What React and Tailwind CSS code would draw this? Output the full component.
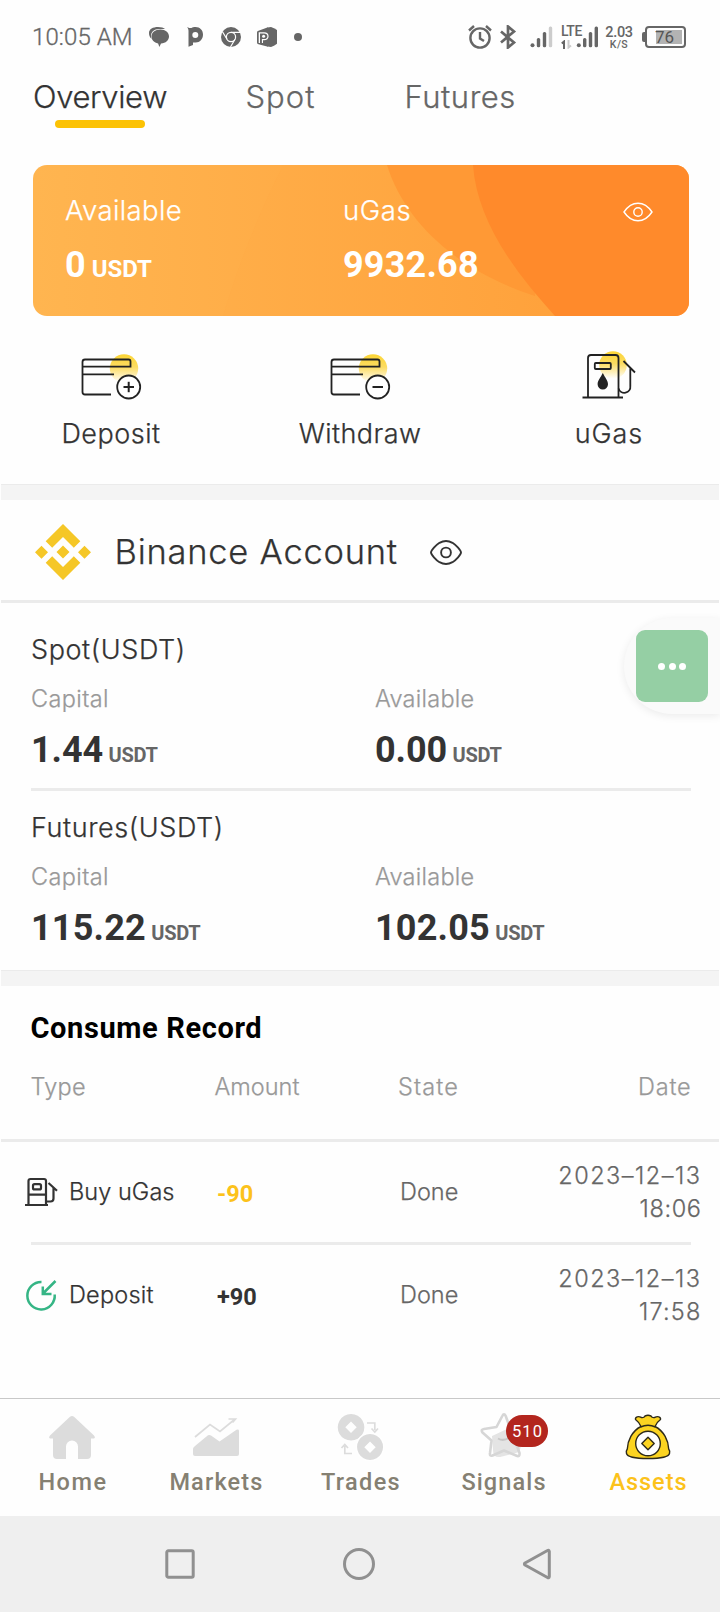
const light = "font-[Inter,sans-serif] font-light [-webkit-text-stroke:0.25px]";
const roboto = "font-[Roboto,sans-serif] [-webkit-text-stroke:0px]";

function StatusBar() {
  return (
    <div className={`flex h-[60px] shrink-0 items-center pt-[13px] pl-8 text-[#666] ${roboto}`}>
      <span className="w-[116px] text-[24px] leading-[28px] font-light tracking-[0.1px] [-webkit-text-stroke:0.3px]">10:05 AM</span>
      <svg className="h-[24px] w-[156px] shrink-0" viewBox="148 24 156 24" fill="#666">
        <path d="M149 32c0-4 4-6 9-6 3 0 6 .8 7 2h-6c-5 0-8 3-8 7 0 1 .2 2 .6 2.700C149.800 36.500 149 34.500 149 32z" />
        <path d="M160.500 28.500c5 0 8.500 3 8.500 7 0 3.600-3.200 6.800-8 7l-1.600 3.500-1.300-3.600c-4-.7-6.600-3.300-6.600-6.900 0-4 3.500-7 9-7z" />
        <path fillRule="evenodd" d="M187 26c1.500 1 3 1 4.500 1 1-1 2-1 4-1 4.500 0 7.500 3.200 7.500 7.500 0 4.600-3.200 8-7.300 8H193v2.500l-4.500 1.800V30c0-1.800-.6-3-1.500-4zM195.300 31a3 3 0 1 0 0 6 3 3 0 0 0 0-6z" />
        <circle cx="231" cy="36" r="10" />
        <g fill="none" stroke="#fff" strokeWidth="1.200">
          <circle cx="231" cy="36" r="4.600" />
          <path d="M231 31.400h9M227 38.300l-4.500-7.600M235 38.300l-4.500 7.700" />
        </g>
        <circle cx="231" cy="36" r="3.100" />
        <path d="M257 31.500Q257 30 258.500 29.700L268 26.300V45.700L258.500 43.200Q257 43 257 41.500z" />
        <path d="M267.500 26.500L271 26 274 27.200 277 29V42.800L274 44.800 271 46 267.500 45.500z" />
        <path d="M258.700 31.300H264.200C267 31.300 268.600 32.900 268.600 35.200S266.900 39.300 264 39.300H263V42H258.700z" fill="#fff" />
        <path fillRule="evenodd" d="M260 32.500H264C266.200 32.500 267.400 33.500 267.400 35.200S266.200 38.100 264 38.100H261.900V42H260z" />
        <circle cx="263.600" cy="35.300" r="1.500" fill="#fff" />
        <circle cx="298" cy="36" r="4" />
      </svg>
      <svg className="ml-[162px] h-[24px] w-[90px] shrink-0" viewBox="466 24 90 24">
        <g fill="none" stroke="#666" strokeWidth="2.400">
          <circle cx="480" cy="37" r="9.600" />
          <path d="M480 31v6.500l4 2.500M469 29.500l5-4.500M486 25l5 4.500" />
          <path d="M501 30.500l13 11-6 5V25.500l6 5-13 11" strokeWidth="2.700" />
        </g>
        <g fill="#666">
          <circle cx="532.500" cy="44.200" r="2" />
          <rect x="536.800" y="37" width="3.400" height="9.300" rx="1.500" />
          <rect x="542.800" y="31" width="3.400" height="15.300" rx="1.500" />
          <rect x="548.800" y="25.500" width="3.400" height="20.800" rx="1.500" fill="#ccc" />
        </g>
      </svg>
      <div className="ml-[5px] flex h-[24px] w-[23px] shrink-0 flex-col">
        <span className="text-[14px] leading-[13px] font-medium tracking-[-0.5px]">LTE</span>
        <svg className="mt-[2px] h-[9px] w-[14px]" viewBox="0 0 14 9">
          <path d="M3 9V1.500L.8 3.500" fill="none" stroke="#666" strokeWidth="2" />
          <path d="M7.500 0v7.500L10 5.500" fill="none" stroke="#ccc" strokeWidth="2" />
        </svg>
      </div>
      <svg className="-ml-[8px] h-[24px] w-[24px] shrink-0" viewBox="576 24 24 24" fill="#666">
        <circle cx="578.800" cy="44.200" r="2" />
        <rect x="583" y="37" width="3.400" height="9.300" rx="1.500" />
        <rect x="588.800" y="31" width="3.400" height="15.300" rx="1.500" />
        <rect x="594.600" y="25.500" width="3.400" height="20.800" rx="1.500" />
      </svg>
      <div className="ml-[5px] flex w-[28px] shrink-0 flex-col items-center pt-[2px] font-medium">
        <span className="text-[14.500px] leading-[13px] tracking-[-0.3px]">2.03</span>
        <span className="text-[10.500px] leading-[11px] tracking-[0.4px]">K/S</span>
      </div>
      <div className="ml-[9px] h-[10px] w-[3px] rounded-l-[2px] bg-[#666]" />
      <div className="relative flex h-[22px] w-[41px] shrink-0 items-center justify-center rounded-[4px] border-2 border-[#666]">
        <div className="absolute top-[2px] right-[2px] h-[14px] w-[26px] bg-[#b3b3b3]" />
        <span className="relative -left-px text-[17px] leading-[18px] text-[#555]">76</span>
      </div>
    </div>
  );
}

function TopTabs() {
  return (
    <div className={`flex h-[105px] shrink-0 pt-5 pl-[33px] text-[31px] leading-[33px] text-[#666] ${light}`}>
      <div className="flex w-[134px] flex-col items-center text-[#333]">
        <span className="tracking-[-0.35px]">Overview</span>
        <div className="mt-[7px] h-[8px] w-[90px] rounded-full bg-[#fcc205]" />
      </div>
      <span className="ml-[78.500px] w-[159px] tracking-[1px]">Spot</span>
      <span className="tracking-[0.55px]">Futures</span>
    </div>
  );
}

function BalanceCard() {
  return (
    <div className="relative ml-[33px] h-[151px] w-[656px] shrink-0 overflow-hidden rounded-[14px] bg-linear-to-r from-[#ffb550] to-[#ff9e37] text-white">
      <svg className="absolute inset-0" width="656" height="151" viewBox="0 0 656 151">
        <path d="M250 0C225 50 205 100 190 151H530V0z" fill="#ff9f33" opacity="0.040" />
        <path d="M354 0C372 58 425 106 502 131L520 0z" fill="#ff9935" />
        <path d="M440 0C444 55 480 105 522 151H656V0z" fill="#ff8a2b" />
      </svg>
      <div className="relative flex pl-8">
        <div className="w-[278px]">
          <div className={`mt-7 text-[27.500px] leading-[34px] tracking-[0.38px] ${light}`}>Available</div>
          <div className={`mt-[17px] flex items-baseline font-bold ${roboto}`}>
            <span className="text-[36px] leading-[42px]">0</span>
            <span className="ml-[6px] text-[24px]">USDT</span>
          </div>
        </div>
        <div className="w-[280px]">
          <div className={`mt-7 text-[27.500px] leading-[34px] tracking-[0.6px] ${light}`}>uGas</div>
          <div className={`mt-[17px] text-[36px] leading-[42px] font-bold tracking-[0.2px] ${roboto}`}>9932.68</div>
        </div>
        <svg className="mt-[37px]" width="30" height="20" viewBox="0 0 30 20" fill="none" stroke="#fff" strokeWidth="1.400">
          <path d="M1 10C5 4 10 1.200 15 1.200S25 4 29 10C25 16 20 18.800 15 18.800S5 16 1 10z" />
          <circle cx="15" cy="10" r="4.200" />
        </svg>
      </div>
    </div>
  );
}

function Glow({ id }) {
  return (
    <defs>
      <linearGradient id={id} x1="0" y1="0" x2="0" y2="1">
        <stop offset="0" stopColor="#fcd535" />
        <stop offset="0.450" stopColor="#fcdc62" />
        <stop offset="1" stopColor="#fff" />
      </linearGradient>
    </defs>
  );
}

function WalletIcon({ minus }) {
  const id = minus ? "glow-minus" : "glow-plus";
  return (
    <svg width="64" height="50" viewBox="79 351 64 50" fill="none" stroke="#222" strokeWidth="1.800">
      <Glow id={id} />
      <circle cx="124" cy="368.500" r="14.200" fill={`url(#${id})`} stroke="none" />
      <path d="M111 394.500H85a2.500 2.500 0 0 1-2.500-2.500V362a2.500 2.500 0 0 1 2.500-2.500H128.500a2 2 0 0 1 2 2V366.700H83M83 374.300H114" />
      <circle cx="128.700" cy="387" r="11.500" fill="#fff" />
      <path d="M123.500 387H134" strokeWidth="2" />
      {!minus && <path d="M128.700 381.800V392.200" strokeWidth="2" />}
    </svg>
  );
}

function GasIcon() {
  return (
    <svg width="64" height="50" viewBox="577 351 64 50" fill="none" stroke="#222" strokeWidth="1.800">
      <Glow id="glow-gas" />
      <circle cx="613" cy="365" r="13.800" fill="url(#glow-gas)" stroke="none" />
      <path d="M588 397V358a3 3 0 0 1 3-3H615.500a3 3 0 0 1 3 3V397M582.500 397.500H623" />
      <rect x="594.800" y="363" width="16" height="6" rx="1" />
      <path d="M602.800 373C605 377.500 608 380.500 608 384.200A5.200 5.200 0 0 1 597.600 384.200C597.600 380.500 600.600 377.500 602.800 373z" fill="#222" stroke="none" />
      <path d="M623.500 361L635 372.500M630.300 368V386a6 6 0 0 1-11.700 2.500" />
    </svg>
  );
}

function Actions() {
  return (
    <div className={`flex h-[168px] shrink-0 justify-between px-[42px] pt-[35px] text-[27px] leading-[33px] text-[#333] ${light}`}>
      <div className="flex w-[138px] flex-col items-center gap-4">
        <WalletIcon />
        <span className="tracking-[0.5px]">Deposit</span>
      </div>
      <div className="flex w-[138px] flex-col items-center gap-4">
        <WalletIcon minus />
        <span className="tracking-[0.45px]">Withdraw</span>
      </div>
      <div className="flex w-[138px] flex-col items-center gap-4">
        <GasIcon />
        <span className="tracking-[0.9px]">uGas</span>
      </div>
    </div>
  );
}

const Band = () => <div className="mx-px h-4 shrink-0 border-t border-[#ebebeb] bg-[#f4f4f4]" />;

function BinanceHeader() {
  return (
    <div className={`mx-px flex h-[103px] shrink-0 items-center border-b-[3px] border-[#ebebeb] pt-1 pl-[34px] text-[#333] ${light}`}>
      <svg width="56" height="56" viewBox="0 0 56 56" fill="#f5c727">
        <path d="M28 0L45.300 17.300 38.800 23.800 28 13 17.200 23.800 10.700 17.300z" />
        <path d="M28 56L45.300 38.700 38.800 32.200 28 43 17.200 32.200 10.700 38.700z" />
        <path d="M6.500 21.700L13 28.200 6.500 34.700 0 28.200zM49.500 21.700L56 28.200 49.500 34.700 43 28.200zM28 21.500L34.500 28 28 34.500 21.500 28z" />
      </svg>
      <span className="ml-[23.500px] w-[315.500px] text-[34.500px] leading-[42px] tracking-[0.76px]">Binance Account</span>
      <svg width="32" height="25" viewBox="0 0 32 25" fill="none" stroke="#333" strokeWidth="1.900">
        <path d="M1 12.500C1 10.500 6 5 9.500 2.800 13.500.6 18.500.6 22.500 2.800 26 5 31 10.500 31 12.500S26 20 22.500 22.200C18.500 24.400 13.500 24.400 9.500 22.200 6 20 1 14.500 1 12.500z" />
        <circle cx="16" cy="12.500" r="4.900" />
      </svg>
    </div>
  );
}

function Figure({ label, value, tracking, labelTracking }) {
  return (
    <div className="w-[344px] shrink-0">
      <div className={`text-[23.500px] leading-[28px] text-[#999] ${labelTracking} ${light}`}>{label}</div>
      <div className={`mt-4 flex items-baseline font-bold ${roboto}`}>
        <span className={`text-[36px] leading-[42px] text-[#333] ${tracking}`}>{value}</span>
        <span className="ml-[5.500px] text-[20px] tracking-[-0.28px] text-[#666]">USDT</span>
      </div>
    </div>
  );
}

function Account({ title, titleTracking, capital, available, tracking, className }) {
  return (
    <div className={`mx-[31px] shrink-0 ${className}`}>
      <div className={`pt-px text-[27px] leading-[33px] text-[#333] ${titleTracking} ${light}`}>{title}</div>
      <div className="mt-[19px] flex">
        <Figure label="Capital" labelTracking="tracking-[0.4px]" value={capital} tracking={tracking} />
        <Figure label="Available" labelTracking="tracking-[0.25px]" value={available} tracking={tracking} />
      </div>
    </div>
  );
}

function PumpIcon() {
  return (
    <svg width="34" height="30" viewBox="24 1178 34 30" fill="none" stroke="#333" strokeWidth="2.200">
      <path d="M28.500 1205V1182a2 2 0 0 1 2-2H44a2 2 0 0 1 2 2V1205M25 1206H48M28.500 1195.700H46" />
      <rect x="33" y="1185.200" width="8" height="5.200" rx="1.500" />
      <path d="M48.500 1184L57 1191.800M53.500 1189V1199.500a3 3 0 0 1-3 3H46.500" />
    </svg>
  );
}

function DepositIcon() {
  return (
    <svg width="34" height="32" viewBox="24 1279 34 32" fill="none" stroke="#35b585" strokeWidth="2.500">
      <path d="M41.500 1282A13.700 13.700 0 1 0 54.700 1294.500" />
      <path d="M55.500 1281L43 1293.500M42.800 1286.500V1294H51.500" />
    </svg>
  );
}

function RecordRow({ icon, type, typeTracking, amount, amountClass, date, time, timeTracking }) {
  return (
    <div className={`flex h-[100px] shrink-0 items-center pl-[24px] text-[23.500px] text-[#333] ${light}`}>
      {icon}
      <span className={`ml-[11px] w-[148px] ${typeTracking}`}>{type}</span>
      <span className={`w-[183px] pt-[5px] font-bold ${roboto} ${amountClass}`}>{amount}</span>
      <span className="w-[100px] text-[#666]">Done</span>
      <div className="flex w-[201.500px] flex-col items-end leading-[33px] text-[#666]">
        <span className="tracking-[1.5px]">{date}</span>
        <span className={timeTracking}>{time}</span>
      </div>
    </div>
  );
}

function Records() {
  return (
    <div className="flex flex-1 flex-col">
      <div className={`pt-[25px] pl-[30.500px] text-[29px] leading-[34px] font-bold tracking-[0.62px] text-black ${roboto}`}>Consume Record</div>
      <div className={`mx-px flex h-[97px] shrink-0 border-b-[3px] border-[#ebebeb] pt-[28px] pl-[29.500px] text-[23.500px] leading-[28px] text-[#999] ${light}`}>
        <span className="w-[184px] tracking-[0.27px]">Type</span>
        <span className="w-[183.500px]">Amount</span>
        <span className="w-[240px] tracking-[1.1px]">State</span>
        <span className="tracking-[0.8px]">Date</span>
      </div>
      <RecordRow icon={<PumpIcon />} type="Buy uGas" typeTracking="tracking-[0.05px]" amount="-90" amountClass="text-[#fcc21b]" date="2023–12–13" time="18:06" timeTracking="tracking-[0.6px]" />
      <div className="mr-[29px] ml-[31px] h-[3px] shrink-0 bg-[#ebebeb]" />
      <RecordRow icon={<DepositIcon />} type="Deposit" typeTracking="tracking-[0.2px]" amount="+90" amountClass="text-[#333]" date="2023–12–13" time="17:58" timeTracking="tracking-[1.2px]" />
    </div>
  );
}

function HomeIcon() {
  return (
    <svg width="50" height="50" viewBox="47 1412 50 50" fill="#dcdcdc">
      <path d="M70 1416.800Q72 1415 74 1416.800L94 1435.500Q96 1438 93.500 1438.600H91V1455a4 4 0 0 1-4 4H78V1446.500a6 6 0 0 0-12 0V1459H57a4 4 0 0 1-4-4V1438.600H50.500Q48 1438 50 1435.500z" />
    </svg>
  );
}

function MarketsIcon() {
  return (
    <svg width="50" height="50" viewBox="191 1412 50 50" fill="#dcdcdc">
      <path d="M195 1446L208 1435.300Q209.500 1434.500 211 1435.500L219.500 1441.500 236.500 1429.800Q239 1429 239 1431V1454a2 2 0 0 1-2 2H195a2 2 0 0 1-2-2V1449Q193 1447.500 195 1446z" />
      <path d="M195 1437L210 1424.500 220 1431.500 234.500 1419.500M228.500 1419H235.500L232.500 1422.500" fill="none" stroke="#dcdcdc" strokeWidth="1.700" />
    </svg>
  );
}

function TradesIcon() {
  return (
    <svg width="50" height="50" viewBox="335 1412 50 50" fill="#dcdcdc">
      <path fillRule="evenodd" d="M351 1414a13.300 13.300 0 1 0 .1 0zM351 1421.500l5.700 5.800-5.700 5.800-5.700-5.800z" />
      <circle cx="370" cy="1447" r="14.500" fill="#fff" />
      <path fillRule="evenodd" d="M370 1434a13 13 0 1 0 .1 0zM370 1441.500l5.700 5.800-5.700 5.800-5.700-5.800z" />
      <path d="M367 1423H374.800V1430M371.500 1428.500L374.800 1432 378 1428.500M352 1453.500H344.800V1446M341.500 1448L344.800 1444.500 348 1448" fill="none" stroke="#dcdcdc" strokeWidth="1.700" />
    </svg>
  );
}

function SignalsIcon() {
  return (
    <div className="relative">
      <svg width="50" height="50" viewBox="479 1412 50 50">
        <path d="M492 1436L507 1429 524 1438 519 1452 512 1454 500 1457Q493 1458 493 1450z" fill="#e4e4e4" />
        <path d="M502.300 1416Q504 1412.500 505.700 1416L509.500 1426.500 523 1428.500Q527 1429.500 524 1433L515.500 1442 519.500 1453Q520 1457.500 516 1455.500L504 1450.500 492.500 1455.500Q489.500 1456.500 490 1453L491.500 1440.500 482.500 1432.500Q480.500 1429.500 484 1429L496.500 1427z" fill="none" stroke="#d6d6d6" strokeWidth="2.600" strokeLinejoin="round" />
        <path d="M498 1438.500Q503 1441.500 509 1438" fill="none" stroke="#c8c8c8" strokeWidth="2" />
      </svg>
      <div className="absolute top-[3px] left-[27px] flex h-[32px] w-[42px] items-center justify-center rounded-full bg-[#b3261e] pt-px pl-px font-[Roboto,sans-serif] text-[16.500px] font-normal tracking-[1.100px] text-white">510</div>
    </div>
  );
}

function AssetsIcon() {
  return (
    <svg width="50" height="50" viewBox="623 1412 50 50" stroke="#2d2a1a" strokeWidth="1.400" strokeLinejoin="round">
      <path d="M641 1426.500C632 1431 627.500 1441 627.300 1449Q625.800 1451 626.500 1453.500C627.500 1457.500 636 1458.500 648 1458.500S668.500 1457.500 669.500 1453.500Q670.200 1451 668.700 1449C668.500 1441 664 1431 655 1426.500Q657 1422 660.500 1419.500C661 1416.500 657.500 1416 654.500 1417.500Q652 1418 651 1416Q648 1414.500 645 1416Q644 1418 641.500 1417.500C638.500 1416 635 1416.500 635.500 1419.500Q639 1422 641 1426.500z" fill="#fcd421" />
      <path d="M640.500 1427Q648 1423.500 655.500 1427" fill="none" />
      <circle cx="648" cy="1443.500" r="12.300" fill="#fff" />
      <path d="M648 1437.300L654.200 1443.500 648 1449.700 641.800 1443.500z" fill="#fcd421" />
    </svg>
  );
}

const tabs = [
  { label: "Home", Icon: HomeIcon, className: "pl-[2px] tracking-[1.51px]" },
  { label: "Markets", Icon: MarketsIcon, className: "pl-px tracking-[1.17px]" },
  { label: "Trades", Icon: TradesIcon, className: "pl-[2px] tracking-[1.32px]" },
  { label: "Signals", Icon: SignalsIcon, className: "tracking-[1.12px]" },
  { label: "Assets", Icon: AssetsIcon, className: "pl-px tracking-[0.96px] text-[#fcc21b]" },
];

function BottomTabs() {
  return (
    <div className={`grid h-[118px] shrink-0 grid-cols-5 border-t border-[#c8c8c8] text-[23.500px] leading-[28px] font-medium text-[#858072] ${roboto}`}>
      {tabs.map(({ label, Icon, className }) => (
        <div key={label} className="flex flex-col items-center pt-[13px]">
          <Icon />
          <span className={`mt-[6px] ${className}`}>{label}</span>
        </div>
      ))}
    </div>
  );
}

function SystemNav() {
  return (
    <div className="flex h-24 shrink-0 items-center justify-between bg-[#efefef] pr-[166px] pl-[164px]">
      <svg width="32" height="32" viewBox="0 0 32 32" fill="none" stroke="#909090" strokeWidth="3">
        <rect x="2.800" y="2.800" width="26.400" height="26.400" rx="1.500" />
      </svg>
      <svg className="ml-[2px]" width="32" height="32" viewBox="0 0 32 32" fill="none" stroke="#909090" strokeWidth="3">
        <circle cx="16" cy="16" r="14.500" />
      </svg>
      <svg width="34" height="32" viewBox="0 0 34 32" fill="none" stroke="#909090" strokeWidth="3" strokeLinejoin="round">
        <path d="M27.500 2.500Q29 1.500 29.300 3.500V28.500Q29 30.500 27.500 29.500L5 17Q3.800 16 5 15z" />
      </svg>
    </div>
  );
}

function FloatingMenu() {
  return (
    <div className="absolute top-[618px] right-0 flex h-24 w-24 items-center rounded-l-full bg-[#fafafa] pl-3 shadow-[0_2px_8px_rgba(0,0,0,0.08)]">
      <div className="flex h-[72px] w-[72px] items-center justify-center gap-[3.500px] rounded-[9px] bg-[#95cfa4]">
        <i className="h-[7px] w-[7px] rounded-full bg-white" />
        <i className="h-[7px] w-[7px] rounded-full bg-white" />
        <i className="h-[7px] w-[7px] rounded-full bg-white" />
      </div>
    </div>
  );
}

export default function App() {
  return (
    <div className="relative flex h-[1612px] w-[720px] flex-col overflow-hidden bg-[#fefefe]">
      <StatusBar />
      <TopTabs />
      <BalanceCard />
      <Actions />
      <Band />
      <BinanceHeader />
      <Account title="Spot(USDT)" titleTracking="tracking-[0.6px]" capital="1.44" available="0.00" tracking="tracking-[-0.08px]" className="pt-[29px] pb-[17px]" />
      <div className="mr-[29px] ml-[31px] h-[3px] shrink-0 bg-[#ebebeb]" />
      <Account title="Futures(USDT)" titleTracking="tracking-[0.6px]" capital="115.22" available="102.05" tracking="tracking-[0.19px]" className="pt-[19px] pb-[21px]" />
      <Band />
      <Records />
      <BottomTabs />
      <SystemNav />
      <FloatingMenu />
    </div>
  );
}
